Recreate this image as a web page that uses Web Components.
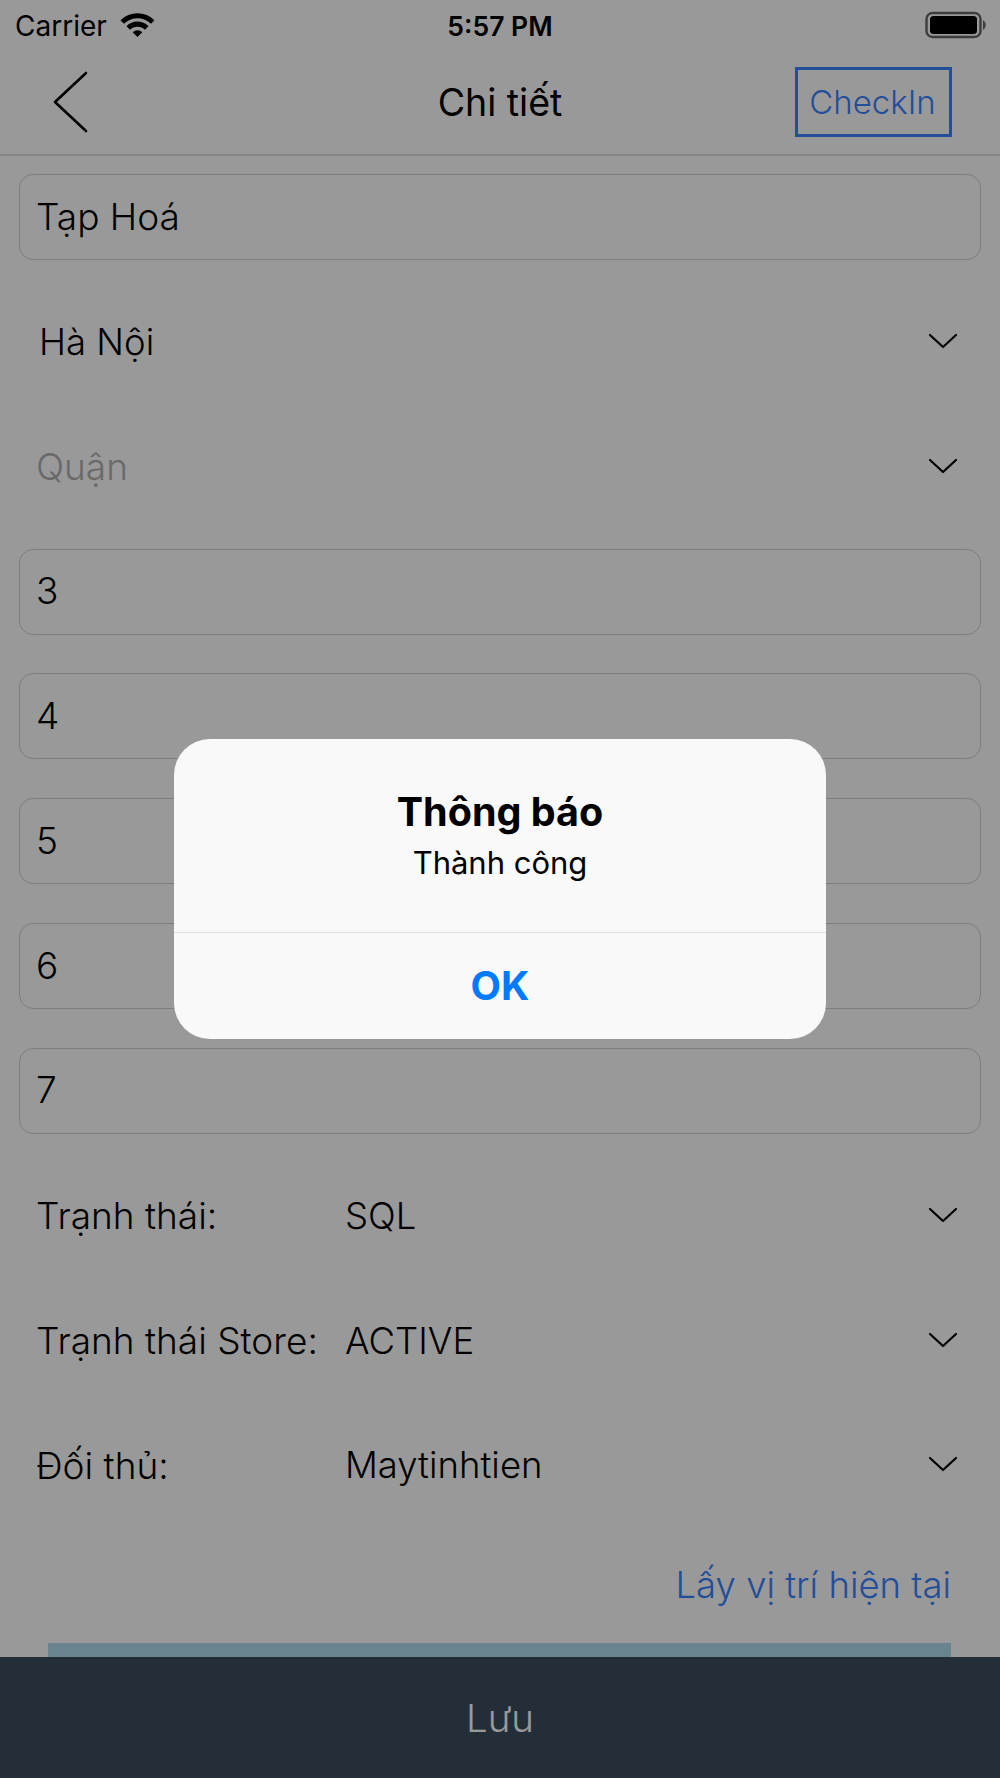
<!DOCTYPE html>
<html lang="vi">
<head>
<meta charset="utf-8">
<title>Chi tiết</title>
<style>
  html, body { margin: 0; height: 100%; background: #fff; }
  body { font-family: Inter, "Noto Sans", sans-serif; color: #000; overflow: hidden; }
</style>
</head>
<body>
<store-detail>
  <status-bar slot="status"></status-bar>
  <nav-bar slot="nav" title="Chi tiết" action="CheckIn"></nav-bar>

  <text-field value="Tạp Hoá"></text-field>
  <select-row value="Hà Nội" inset></select-row>
  <select-row placeholder="Quận"></select-row>
  <text-field value="3"></text-field>
  <text-field value="4"></text-field>
  <text-field value="5"></text-field>
  <text-field value="6"></text-field>
  <text-field value="7"></text-field>
  <select-row label="Trạnh thái:" value="SQL"></select-row>
  <select-row label="Trạnh thái Store:" value="ACTIVE"></select-row>
  <select-row label="Đối thủ:" value="Maytinhtien"></select-row>
  <location-link>Lấy vị trí hiện tại</location-link>
  <map-preview></map-preview>

  <save-bar slot="footer">Lưu</save-bar>
</store-detail>
<alert-dialog heading="Thông báo" message="Thành công" button="OK"></alert-dialog>

<script>
  // Small helper so every element below only has to declare its markup
  function shadow(el, html) {
    el.attachShadow({ mode: 'open' }).innerHTML = html;
    return el.shadowRoot;
  }

  const CHEVRON = `
    <svg width="30" height="20" viewBox="0 0 30 20" fill="none" stroke="#000" stroke-width="2.2" stroke-linecap="round" stroke-linejoin="round">
      <path d="M2 3 L15 15 L28 3"/>
    </svg>`;

  class StoreDetail extends HTMLElement {
    constructor() {
      super();
      shadow(this, `
        <style>
          :host { display: flex; flex-direction: column; width: 1000px; height: 1778px; }
          .content { flex: 1; min-height: 0; overflow: hidden; display: flex; flex-direction: column; padding: 18px 19px 0; }
        </style>
        <slot name="status"></slot>
        <slot name="nav"></slot>
        <div class="content"><slot></slot></div>
        <slot name="footer"></slot>
      `);
    }
  }

  class StatusBar extends HTMLElement {
    constructor() {
      super();
      shadow(this, `
        <style>
          :host { flex: none; display: grid; grid-template-columns: 1fr auto 1fr; align-items: center; height: 50px; padding: 2px 12px 0 15px; box-sizing: border-box; font-size: 28px; }
          .left { display: flex; align-items: center; gap: 13px; }
          .left svg { margin-top: -4px; }
          .time { margin-left: -3px; font-weight: 600; font-size: 26.5px; }
          .right { justify-self: end; display: flex; margin-top: -3px; }
        </style>
        <div class="left">
          <span>Carrier</span>
          <svg width="35" height="25" viewBox="0 0 35 25">
            <path d="M0.5 8.2 A24 24 0 0 1 34.5 8.2 L31 11.8 A19 19 0 0 0 4 11.8 Z"/>
            <path d="M6.5 14.2 A15.5 15.5 0 0 1 28.5 14.2 L25 17.8 A10.5 10.5 0 0 0 10 17.8 Z"/>
            <path d="M12.6 20.3 A7 7 0 0 1 22.4 20.3 L17.5 25 Z"/>
          </svg>
        </div>
        <span class="time">5:57 PM</span>
        <div class="right">
          <svg width="63" height="28" viewBox="0 0 63 28">
            <rect x="1.5" y="2" width="54" height="24" rx="6" fill="none" stroke="#666" stroke-width="2.4"/>
            <rect x="5" y="5" width="47" height="18" rx="3.5" fill="#000"/>
            <path d="M58 9 A6 6 0 0 1 58 19 Z" fill="#666"/>
          </svg>
        </div>
      `);
    }
  }

  class NavBar extends HTMLElement {
    constructor() {
      super();
      const title = this.getAttribute('title');
      const action = this.getAttribute('action');
      shadow(this, `
        <style>
          :host { flex: none; display: grid; grid-template-columns: 1fr auto 1fr; align-items: center; height: 106px; padding: 0 48px 0 52px; box-sizing: border-box; border-bottom: 2px solid #ddd; }
          .back { display: block; }
          h1 { margin: 0 0 0 -4px; font-size: 37.5px; font-weight: 400; }
          .action { justify-self: end; box-sizing: border-box; width: 157px; height: 70px; display: flex; align-items: center; justify-content: center; padding-right: 2px; border: 3px solid #3b82ff; color: #3b82ff; font-size: 33px; font-weight: 300; }
        </style>
        <svg class="back" width="36" height="62" viewBox="0 0 36 62" fill="none" stroke="#000" stroke-width="2.6" stroke-linecap="round" stroke-linejoin="round">
          <path d="M34 2 L3 31 L34 60"/>
        </svg>
        <h1>${title}</h1>
        <div class="action">${action}</div>
      `);
    }
  }

  class TextField extends HTMLElement {
    constructor() {
      super();
      shadow(this, `
        <style>
          :host { flex: none; display: flex; align-items: center; box-sizing: border-box; height: 86px; margin-bottom: 38.85px; padding: 0 16px 2px; border: 1.5px solid #d2d2d2; border-radius: 14px; font-size: 37px; font-weight: 300; }
        </style>
        <span>${this.getAttribute('value')}</span>
      `);
    }
  }

  class SelectRow extends HTMLElement {
    constructor() {
      super();
      const label = this.getAttribute('label');
      const value = this.getAttribute('value');
      const placeholder = this.getAttribute('placeholder');
      shadow(this, `
        <style>
          :host { flex: none; display: flex; align-items: center; height: 86px; margin-bottom: 38.85px; padding: 0 23px 0 17px; font-size: 37px; font-weight: 300; }
          :host([inset]) { padding-left: 20px; }
          .label { width: 309px; flex: none; }
          .value { flex: 1; font-size: 36.5px; }
          .placeholder { flex: 1; color: #b0b0b0; }
        </style>
        ${label ? `<span class="label">${label}</span>` : ''}
        ${placeholder ? `<span class="placeholder">${placeholder}</span>` : `<span class="value">${value}</span>`}
        ${CHEVRON}
      `);
    }
  }

  class LocationLink extends HTMLElement {
    constructor() {
      super();
      shadow(this, `
        <style>
          :host { flex: none; display: block; text-align: right; padding-right: 30px; margin-top: 13px; color: #3b82ff; font-size: 36.5px; font-weight: 300; line-height: 50px; }
        </style>
        <slot></slot>
      `);
    }
  }

  class MapPreview extends HTMLElement {
    constructor() {
      super();
      shadow(this, `
        <style>
          :host { display: block; flex: none; height: 200px; margin: 33px 30px 0 29px; background: #b0dbee; }
        </style>
      `);
    }
  }

  class SaveBar extends HTMLElement {
    constructor() {
      super();
      shadow(this, `
        <style>
          :host { flex: none; display: flex; align-items: center; justify-content: center; height: 121px; background: #3d4d5f; color: #fff; font-size: 38.5px; font-weight: 300; }
        </style>
        <slot></slot>
      `);
    }
  }

  class AlertDialog extends HTMLElement {
    constructor() {
      super();
      shadow(this, `
        <style>
          /* Scrim over the whole page, the dialog sits centred on it */
          :host { position: fixed; inset: 0; display: flex; justify-content: center; background: rgba(0, 0, 0, 0.4); }
          .box { align-self: flex-start; margin-top: 739px; width: 652px; height: 300px; display: flex; flex-direction: column; background: #f9f9f9; border-radius: 36px; text-align: center; }
          .body { height: 194px; box-sizing: border-box; padding-top: 50px; border-bottom: 1.5px solid #e0e0e0; }
          h2 { margin: 0; font-size: 39.5px; font-weight: 700; line-height: 46px; }
          p { margin: 10px 0 0; font-size: 31px; font-weight: 400; line-height: 36px; }
          .btn { flex: 1; display: flex; align-items: center; justify-content: center; color: #007aff; font-size: 39.5px; font-weight: 700; }
        </style>
        <div class="box">
          <div class="body">
            <h2>${this.getAttribute('heading')}</h2>
            <p>${this.getAttribute('message')}</p>
          </div>
          <div class="btn">${this.getAttribute('button')}</div>
        </div>
      `);
    }
  }

  customElements.define('store-detail', StoreDetail);
  customElements.define('status-bar', StatusBar);
  customElements.define('nav-bar', NavBar);
  customElements.define('text-field', TextField);
  customElements.define('select-row', SelectRow);
  customElements.define('location-link', LocationLink);
  customElements.define('map-preview', MapPreview);
  customElements.define('save-bar', SaveBar);
  customElements.define('alert-dialog', AlertDialog);
</script>
</body>
</html>
